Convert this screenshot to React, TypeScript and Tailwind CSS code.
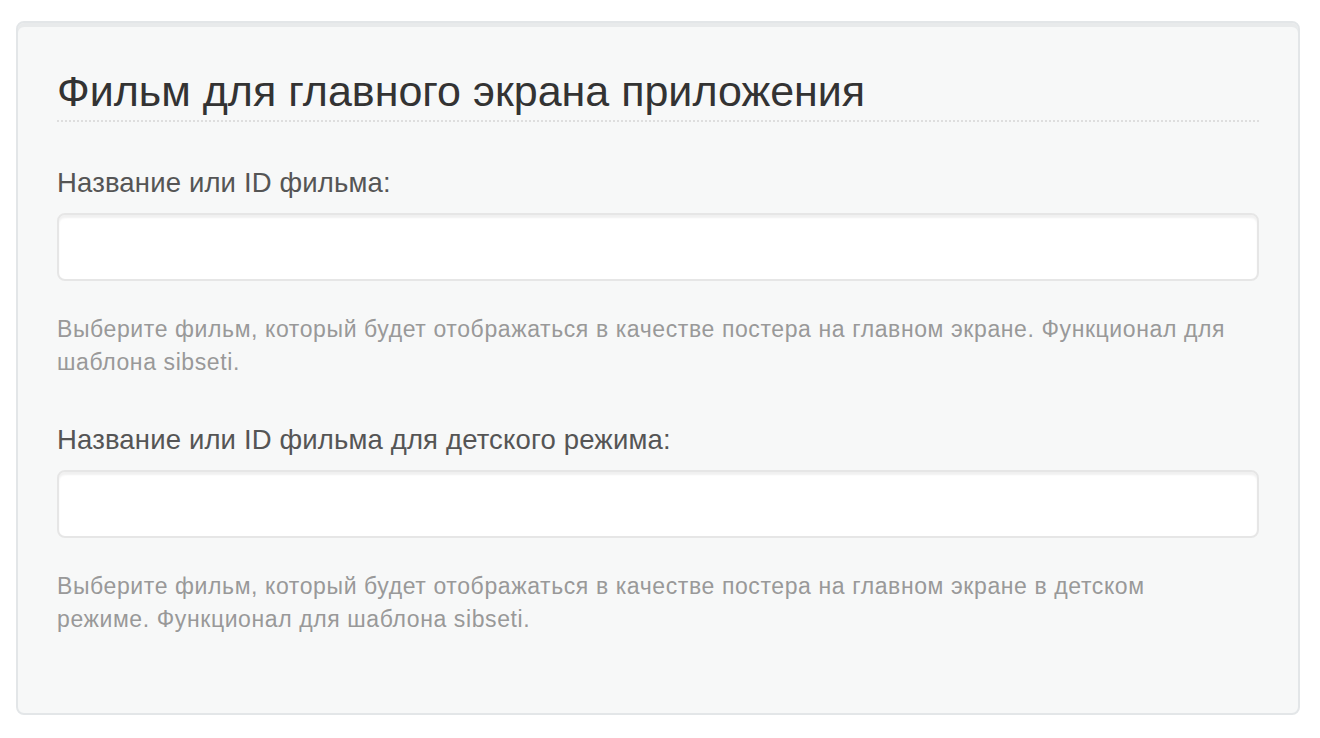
const fields = [
  {
    label: 'Название или ID фильма:',
    help: 'Выберите фильм, который будет отображаться в качестве постера на главном экране. Функционал для шаблона sibseti.',
  },
  {
    label: 'Название или ID фильма для детского режима:',
    help: 'Выберите фильм, который будет отображаться в качестве постера на главном экране в детском режиме. Функционал для шаблона sibseti.',
  },
]

export default function App() {
  return (
    <div className="min-h-screen bg-white pl-4 pr-[20px] pt-[21px] pb-[23px] font-['Liberation_Sans',Arial,sans-serif]">
      <div className="h-[694px] rounded-[8px] border-2 border-[#e3e6e8] bg-[#f7f8f8] px-[39px] pt-[44px] shadow-[inset_0_4px_0_#e8eaeb]">
        <h2 className="border-b-2 border-dotted border-[#dedede] pb-[5px] text-[43px] leading-[48px] text-[#333]">
          Фильм для главного экрана приложения
        </h2>

        {fields.map((field, index) => (
          <div key={field.label} className={index === 0 ? 'mt-[45px]' : 'mt-[45px]'}>
            <label className="block text-[27.5px] leading-[32px] tracking-[0.15px] text-[#555]">
              {field.label}
            </label>
            <input
              type="text"
              className="mt-[14px] block h-[68px] w-full rounded-[8px] border-2 border-[#e6e6e6] bg-white shadow-[inset_0_3px_2px_rgba(0,0,0,0.06)] outline-none"
            />
            <p className="mt-[32px] max-w-[1176px] text-[23px] leading-[33px] tracking-[0.6px] text-[#999]">
              {field.help}
            </p>
          </div>
        ))}
      </div>
    </div>
  )
}
